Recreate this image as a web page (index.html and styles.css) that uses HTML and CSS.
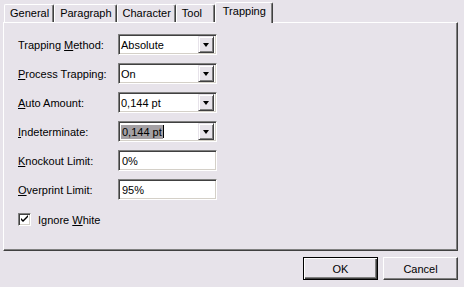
FILE: index.html
```html
<!DOCTYPE html>
<html lang="en">
<head>
    <meta charset="UTF-8">
    <title>Trapping</title>
    <link rel="stylesheet" href="styles.css">
</head>
<body>
    <div class="dialog">
        <div class="tabs">
            <div class="tab">General</div>
            <div class="tab">Paragraph</div>
            <div class="tab">Character</div>
            <div class="tab">Tool</div>
            <div class="tab active">Trapping</div>
        </div>
        <div class="panel">
            <div class="row">
                <label>Trapping <u>M</u>ethod:</label>
                <div class="combo"><span class="value">Absolute</span><span class="drop"></span></div>
            </div>
            <div class="row">
                <label><u>P</u>rocess Trapping:</label>
                <div class="combo"><span class="value">On</span><span class="drop"></span></div>
            </div>
            <div class="row">
                <label><u>A</u>uto Amount:</label>
                <div class="combo"><span class="value">0,144 pt</span><span class="drop"></span></div>
            </div>
            <div class="row">
                <label><u>I</u>ndeterminate:</label>
                <div class="combo"><span class="value"><span class="selected">0,144 pt</span><span class="caret"></span></span><span class="drop"></span></div>
            </div>
            <div class="row">
                <label><u>K</u>nockout Limit:</label>
                <div class="field">0%</div>
            </div>
            <div class="row">
                <label><u>O</u>verprint Limit:</label>
                <div class="field">95%</div>
            </div>
            <div class="check-row">
                <span class="checkbox">
                    <svg width="9" height="9" viewBox="0 0 9 9"><path d="M1 3v2l2 2 5-5V0L3 5z" fill="#000"/></svg>
                </span>
                <span>Ignore <u>W</u>hite</span>
            </div>
        </div>
        <div class="buttons">
            <button class="btn default">OK</button>
            <button class="btn">Cancel</button>
        </div>
    </div>
</body>
</html>
```

FILE: styles.css
```css
body {
    margin: 0;
    background-color: #e7e3ea;
    font-family: "Liberation Sans", Arial, sans-serif;
    font-size: 11px;
    color: #000;
}
.dialog {
    width: 464px;
    height: 287px;
    padding: 2px 6px 0 3px;
    box-sizing: border-box;
}
.tabs {
    display: flex;
    align-items: flex-end;
    height: 20px;
    padding-left: 1px;
    position: relative;
    z-index: 1;
}
.tab {
    min-width: 28px;
    height: 17px;
    line-height: 17px;
    padding: 0 4px 0 5px;
    border-top: 1px solid #fff;
    border-left: 1px solid #fff;
    border-right: 1px solid #404040;
    box-shadow: inset -1px 0 0 #808080;
    border-radius: 2px 2px 0 0;
}
.tab.active {
    height: 20px;
    line-height: 17px;
    margin-bottom: -1px;
    padding: 0 6px 0 7px;
    background-color: #e7e3ea;
}
.panel {
    height: 229px;
    box-sizing: border-box;
    border-top: 1px solid #fff;
    border-left: 1px solid #fff;
    border-right: 1px solid #404040;
    border-bottom: 1px solid #404040;
    box-shadow: inset -1px -1px 0 #808080;
    padding: 11px 0 0 14px;
    display: flex;
    flex-direction: column;
    gap: 8px;
}
.row {
    display: flex;
    align-items: center;
    height: 21px;
}
.row label {
    width: 100px;
}
.combo, .field {
    width: 99px;
    height: 21px;
    box-sizing: border-box;
    background-color: #fff;
    border-top: 1px solid #808080;
    border-left: 1px solid #808080;
    border-right: 1px solid #fff;
    border-bottom: 1px solid #fff;
    box-shadow: inset 1px 1px 0 #404040, inset -1px -1px 0 #d4d0c8;
    display: flex;
    align-items: center;
}
.field {
    padding-left: 3px;
}
.value {
    flex: 1;
    padding-left: 2px;
    display: flex;
    align-items: center;
}
.selected {
    background-color: #a4a0a4;
    color: #000;
    padding: 0 1px;
    line-height: 14px;
}
.caret {
    width: 1px;
    height: 13px;
    background-color: #000;
}
.drop {
    width: 16px;
    height: 17px;
    margin-right: 2px;
    box-sizing: border-box;
    background-color: #e7e3ea;
    border-top: 1px solid #e7e3ea;
    border-left: 1px solid #e7e3ea;
    border-right: 1px solid #404040;
    border-bottom: 1px solid #404040;
    box-shadow: inset 1px 1px 0 #fff, inset -1px -1px 0 #808080;
    position: relative;
}
.drop::after {
    content: '';
    position: absolute;
    left: 4px;
    top: 6px;
    border-left: 3.5px solid transparent;
    border-right: 3.5px solid transparent;
    border-top: 4px solid #000;
}
.check-row {
    display: flex;
    align-items: center;
    gap: 7px;
    margin-top: 5px;
}
.checkbox {
    width: 13px;
    height: 13px;
    box-sizing: border-box;
    background-color: #fff;
    border-top: 1px solid #808080;
    border-left: 1px solid #808080;
    border-right: 1px solid #fff;
    border-bottom: 1px solid #fff;
    box-shadow: inset 1px 1px 0 #404040, inset -1px -1px 0 #d4d0c8;
    display: flex;
    align-items: center;
    justify-content: center;
}
.buttons {
    display: flex;
    justify-content: flex-end;
    gap: 5px;
    margin-top: 6px;
}
.btn {
    width: 75px;
    height: 23px;
    box-sizing: border-box;
    font-family: "Liberation Sans", Arial, sans-serif;
    font-size: 11px;
    color: #000;
    background-color: #e7e3ea;
    border-top: 1px solid #fff;
    border-left: 1px solid #fff;
    border-right: 1px solid #404040;
    border-bottom: 1px solid #404040;
    box-shadow: inset -1px -1px 0 #808080;
    padding: 0;
}
.btn.default {
    border: 1px solid #000;
    box-shadow: inset 1px 1px 0 #fff, inset -1px -1px 0 #404040, inset -2px -2px 0 #808080;
}
```
